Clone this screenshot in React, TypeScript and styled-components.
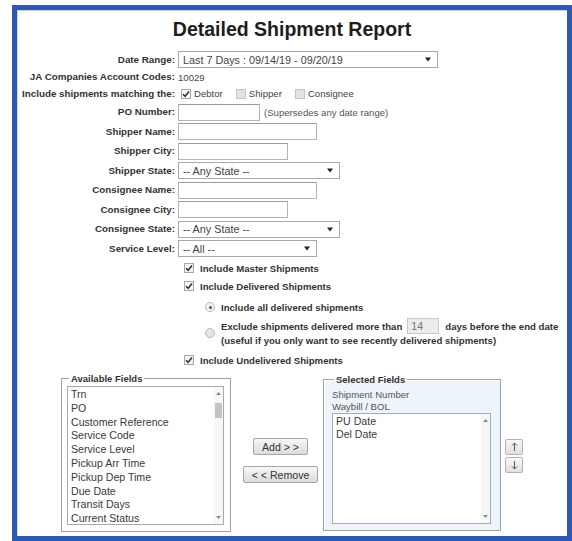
import styled, { createGlobalStyle } from 'styled-components';

const GlobalStyle = createGlobalStyle`
  html, body {
    margin: 0;
    padding: 0;
    background: #fff;
  }
  body {
    font-family: "Liberation Sans", Arial, sans-serif;
    color: #333;
  }
`;

const Frame = styled.div`
  box-sizing: border-box;
  width: 560px;
  height: 536px;
  margin: 5px 0 0 12px;
  border: 5px solid #2d59b4;
  box-shadow: inset 1px 1px 0 #c9d5ec;
  display: flex;
  flex-direction: column;
  overflow: hidden;
`;

const Title = styled.h1`
  margin: 0;
  padding-top: 8px;
  font-size: 19.5px;
  line-height: 23px;
  font-weight: bold;
  text-align: center;
  color: #1d1d1d;
`;

const FormGrid = styled.div`
  display: grid;
  grid-template-columns: 158px auto;
  column-gap: 3px;
  row-gap: 2.5px;
  align-items: center;
  justify-content: start;
  margin-top: 10px;
`;

const Label = styled.div`
  font-size: 9.8px;
  font-weight: bold;
  line-height: 12px;
  text-align: right;
  white-space: nowrap;
  color: #333;
`;

const Field = styled.div<{ $h: number }>`
  display: flex;
  align-items: center;
  height: ${(p) => p.$h}px;
  font-size: 9.6px;
  color: #444;
  white-space: nowrap;
`;

const SelectBox = styled.div<{ $w: number }>`
  box-sizing: border-box;
  width: ${(p) => p.$w}px;
  height: 17px;
  border: 1px solid #a9a9a9;
  background: #fff;
  padding: 0 6px 0 4px;
  display: flex;
  align-items: center;
  justify-content: space-between;
  font-size: 10.8px;
  color: #444;
`;

const TextInput = styled.input<{ $w: number }>`
  box-sizing: border-box;
  width: ${(p) => p.$w}px;
  height: 17px;
  margin: 0;
  border: 1px solid #b5b5b5;
  border-top-color: #9c9c9c;
  background: #fff;
  padding: 0 3px;
  font: 10.6px "Liberation Sans", Arial, sans-serif;
  color: #666;
  outline: none;
`;

const Note = styled.span`
  margin-left: 4px;
  font-size: 9.6px;
  color: #555;
`;

const Choice = styled.label`
  display: flex;
  align-items: center;
  gap: 3px;
  margin: 0 10px 0 3px;
  font-size: 9.6px;
  color: #444;
`;

const Box = styled.span<{ $on?: boolean }>`
  box-sizing: border-box;
  width: 10px;
  height: 10px;
  flex: none;
  border: 1px solid ${(p) => (p.$on ? '#a8a8a8' : '#c4c4c4')};
  background: ${(p) => (p.$on ? '#f4f4f4' : '#e2e2e2')};
  display: flex;
  align-items: center;
  justify-content: center;
`;

const Round = styled.span<{ $on?: boolean }>`
  box-sizing: border-box;
  width: 10px;
  height: 10px;
  flex: none;
  border-radius: 50%;
  border: 1px solid #b9b9b9;
  background: ${(p) => (p.$on ? '#f2f2f2' : '#e4e4e4')};
  display: flex;
  align-items: center;
  justify-content: center;

  &::after {
    content: '';
    display: ${(p) => (p.$on ? 'block' : 'none')};
    width: 3px;
    height: 3px;
    border-radius: 50%;
    background: #555;
  }
`;

const Options = styled.div`
  display: flex;
  flex-direction: column;
  padding-left: 167px;
  margin-top: 4px;
`;

const OptRow = styled.div<{ $top: number }>`
  display: flex;
  align-items: center;
  gap: 6px;
  height: 14px;
  margin-top: ${(p) => p.$top}px;
  font-size: 9.6px;
  font-weight: bold;
  color: #333;
  white-space: nowrap;
`;

const SubOptions = styled.div`
  display: flex;
  flex-direction: column;
  padding-left: 21px;
`;

const ExcludeRow = styled.div`
  display: flex;
  align-items: center;
  gap: 6px;
  margin-top: 4px;
  font-size: 9.6px;
  font-weight: bold;
  color: #333;
  white-space: nowrap;
`;

const Lines = styled.div`
  display: flex;
  flex-direction: column;
`;

const Line = styled.div<{ $h: number }>`
  display: flex;
  align-items: center;
  height: ${(p) => p.$h}px;
`;

const DaysInput = styled.input`
  box-sizing: border-box;
  width: 32px;
  height: 16px;
  margin: 0 6px 0 5px;
  border: 1px solid #c9c9c9;
  background: #ececec;
  padding: 0 3px;
  font: 10.6px "Liberation Sans", Arial, sans-serif;
  color: #777;
  outline: none;
`;

const Bottom = styled.div`
  display: flex;
  align-items: center;
  padding-left: 44px;
  margin-top: 6px;
`;

const FieldBox = styled.fieldset<{ $w: number; $pad: string; $tint?: boolean }>`
  box-sizing: border-box;
  width: ${(p) => p.$w}px;
  min-width: 0;
  margin: 0;
  padding: ${(p) => p.$pad};
  border: 1px solid #a2a2a2;
  box-shadow: inset 1px 1px 0 #fff;
  background: ${(p) => (p.$tint ? '#edf4fb' : '#fff')};
`;

const Legend = styled.legend`
  margin-left: 2px;
  padding: 0 2px;
  font-size: 9.5px;
  line-height: 11px;
  font-weight: bold;
  color: #333;
`;

const Info = styled.div`
  padding-top: 4px;
  font-size: 9.6px;
  line-height: 12px;
  color: #555;
`;

const ListBox = styled.div<{ $h: number }>`
  box-sizing: border-box;
  height: ${(p) => p.$h}px;
  border: 1px solid #aaa;
  background: #fff;
  display: flex;
`;

const Items = styled.div<{ $lh: number }>`
  flex: 1;
  padding: 1px 0 0 3px;
  font-size: 10.6px;
  line-height: ${(p) => p.$lh}px;
  color: #3a3a3a;
  white-space: nowrap;
  overflow: hidden;
`;

const ScrollCol = styled.div`
  width: 9px;
  display: flex;
  flex-direction: column;
  background: #f7f7f7;
`;

const ScrollArrow = styled.div`
  height: 13px;
  display: flex;
  align-items: center;
  justify-content: center;
`;

const Track = styled.div`
  flex: 1;
`;

const Thumb = styled.div`
  height: 15px;
  margin: 3px 1px 0;
  background: #c4c4c4;
`;

const Middle = styled.div`
  width: 92px;
  box-sizing: border-box;
  padding-left: 7px;
  margin-top: 16px;
  display: flex;
  flex-direction: column;
  align-items: center;
  gap: 11px;
`;

const Button = styled.button`
  height: 17px;
  margin: 0;
  padding: 0 8px;
  border: 1px solid #a5a5a5;
  border-radius: 2px;
  background: linear-gradient(#f7f7f7, #dcdcdc);
  font: 10.6px "Liberation Sans", Arial, sans-serif;
  color: #333;
  white-space: nowrap;
`;

const Movers = styled.div`
  margin: 7px 0 0 4px;
  display: flex;
  flex-direction: column;
  gap: 2px;
`;

const MoveButton = styled.button`
  box-sizing: border-box;
  width: 18px;
  height: 16px;
  margin: 0;
  padding: 0;
  border: 1px solid #b3b3b3;
  border-radius: 2px;
  background: linear-gradient(#f8f8f8, #e0e0e0);
  display: flex;
  align-items: center;
  justify-content: center;
`;

const Caret = () => (
  <svg width="6" height="5" viewBox="0 0 6 5">
    <path d="M0 0.5 L6 0.5 L3 4.5 Z" fill="#222" />
  </svg>
);

const Tick = () => (
  <svg width="8" height="8" viewBox="0 0 8 8">
    <path d="M1 4.2 L3.1 6.3 L7 1.5" stroke="#333" strokeWidth="1.5" fill="none" />
  </svg>
);

const Tri = ({ down }: { down?: boolean }) => (
  <svg width="5" height="3" viewBox="0 0 5 3">
    <path d={down ? 'M0 0 L5 0 L2.5 3 Z' : 'M0 3 L5 3 L2.5 0 Z'} fill="#8a8a8a" />
  </svg>
);

const Arrow = ({ down }: { down?: boolean }) => (
  <svg width="7" height="10" viewBox="0 0 7 10">
    <path
      d={down ? 'M3.5 1 L3.5 9 M1 6.5 L3.5 9 L6 6.5' : 'M3.5 9 L3.5 1 M1 3.5 L3.5 1 L6 3.5'}
      stroke="#555"
      strokeWidth="1"
      fill="none"
    />
  </svg>
);

const Select = ({ w, value }: { w: number; value: string }) => (
  <SelectBox $w={w}>
    <span>{value}</span>
    <Caret />
  </SelectBox>
);

const Scroller = ({ thumb }: { thumb?: boolean }) => (
  <ScrollCol>
    <ScrollArrow>
      <Tri />
    </ScrollArrow>
    <Track>{thumb && <Thumb />}</Track>
    <ScrollArrow>
      <Tri down />
    </ScrollArrow>
  </ScrollCol>
);

const available = [
  'Trn',
  'PO',
  'Customer Reference',
  'Service Code',
  'Service Level',
  'Pickup Arr Time',
  'Pickup Dep Time',
  'Due Date',
  'Transit Days',
  'Current Status',
];

const selected = ['PU Date', 'Del Date'];

export default function App() {
  return (
    <>
      <GlobalStyle />
      <Frame>
        <Title>Detailed Shipment Report</Title>

        <FormGrid>
          <Label>Date Range:</Label>
          <Field $h={17}>
            <Select w={260} value="Last 7 Days : 09/14/19 - 09/20/19" />
          </Field>

          <Label>JA Companies Account Codes:</Label>
          <Field $h={13}>10029</Field>

          <Label>Include shipments matching the:</Label>
          <Field $h={15}>
            <Choice>
              <Box $on>
                <Tick />
              </Box>
              Debtor
            </Choice>
            <Choice>
              <Box />
              Shipper
            </Choice>
            <Choice>
              <Box />
              Consignee
            </Choice>
          </Field>

          <Label>PO Number:</Label>
          <Field $h={17}>
            <TextInput $w={82} />
            <Note>(Supersedes any date range)</Note>
          </Field>

          <Label>Shipper Name:</Label>
          <Field $h={17}>
            <TextInput $w={139} />
          </Field>

          <Label>Shipper City:</Label>
          <Field $h={17}>
            <TextInput $w={110} />
          </Field>

          <Label>Shipper State:</Label>
          <Field $h={17}>
            <Select w={162} value="-- Any State --" />
          </Field>

          <Label>Consignee Name:</Label>
          <Field $h={17}>
            <TextInput $w={139} />
          </Field>

          <Label>Consignee City:</Label>
          <Field $h={17}>
            <TextInput $w={110} />
          </Field>

          <Label>Consignee State:</Label>
          <Field $h={17}>
            <Select w={162} value="-- Any State --" />
          </Field>

          <Label>Service Level:</Label>
          <Field $h={17}>
            <Select w={139} value="-- All --" />
          </Field>
        </FormGrid>

        <Options>
          <OptRow $top={0}>
            <Box $on>
              <Tick />
            </Box>
            Include Master Shipments
          </OptRow>
          <OptRow $top={4}>
            <Box $on>
              <Tick />
            </Box>
            Include Delivered Shipments
          </OptRow>
          <SubOptions>
            <OptRow $top={7}>
              <Round $on />
              Include all delivered shipments
            </OptRow>
            <ExcludeRow>
              <Round />
              <Lines>
                <Line $h={16}>
                  Exclude shipments delivered more than
                  <DaysInput defaultValue="14" />
                  days before the end date
                </Line>
                <Line $h={13}>(useful if you only want to see recently delivered shipments)</Line>
              </Lines>
            </ExcludeRow>
          </SubOptions>
          <OptRow $top={6}>
            <Box $on>
              <Tick />
            </Box>
            Include Undelivered Shipments
          </OptRow>
        </Options>

        <Bottom>
          <FieldBox $w={170} $pad="2px 6px 6px 5px">
            <Legend>Available Fields</Legend>
            <ListBox $h={139}>
              <Items $lh={13.8}>
                {available.map((f) => (
                  <div key={f}>{f}</div>
                ))}
              </Items>
              <Scroller thumb />
            </ListBox>
          </FieldBox>

          <Middle>
            <Button>Add &gt; &gt;</Button>
            <Button>&lt; &lt; Remove</Button>
          </Middle>

          <FieldBox $w={178} $pad="0 9px 6px 8px" $tint>
            <Legend>Selected Fields</Legend>
            <Info>
              Shipment Number
              <br />
              Waybill / BOL
            </Info>
            <ListBox $h={111}>
              <Items $lh={13}>
                {selected.map((f) => (
                  <div key={f}>{f}</div>
                ))}
              </Items>
              <Scroller />
            </ListBox>
          </FieldBox>

          <Movers>
            <MoveButton>
              <Arrow />
            </MoveButton>
            <MoveButton>
              <Arrow down />
            </MoveButton>
          </Movers>
        </Bottom>
      </Frame>
    </>
  );
}
